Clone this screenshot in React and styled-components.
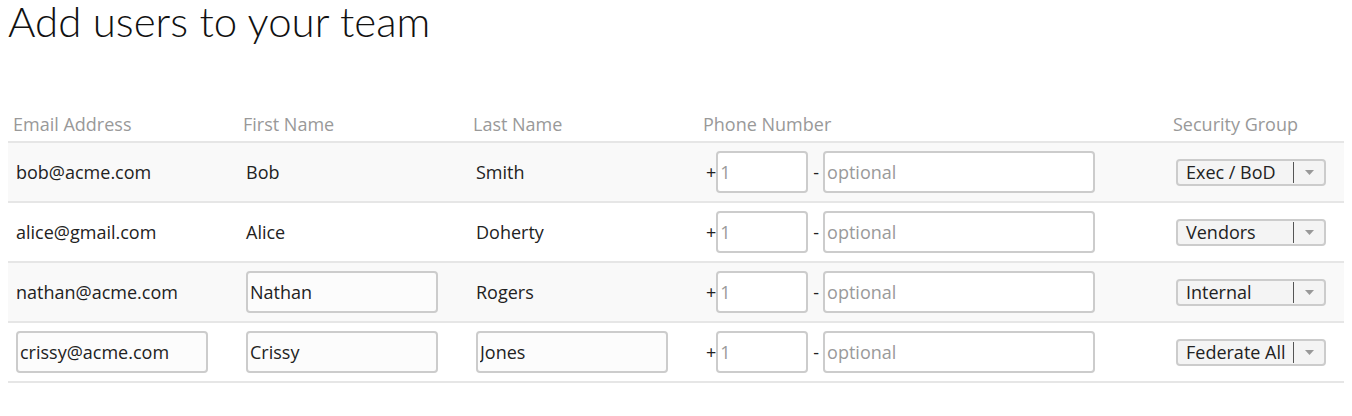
import React from "react";
import styled, { createGlobalStyle } from "styled-components";

const GlobalStyle = createGlobalStyle`
  body {
    margin: 0 8px 8px;
    background: #ffffff;
    font-family: "Open Sans", "Liberation Sans", sans-serif;
    color: #222222;
  }
`;

const users = [
  { email: "bob@acme.com", first: "Bob", last: "Smith", group: "Exec / BoD" },
  { email: "alice@gmail.com", first: "Alice", last: "Doherty", group: "Vendors" },
  { email: "nathan@acme.com", first: "Nathan", last: "Rogers", group: "Internal", editFirst: true },
  {
    email: "crissy@acme.com",
    first: "Crissy",
    last: "Jones",
    group: "Federate All",
    editEmail: true,
    editFirst: true,
    editLast: true,
  },
];

const App = () => {
  return (
    <>
      <GlobalStyle />
      <Title>Add users to your team</Title>
      <Table>
        <colgroup>
          <col style={{ width: 230 }} />
          <col style={{ width: 230 }} />
          <col style={{ width: 230 }} />
          <col style={{ width: 470 }} />
          <col />
        </colgroup>
        <thead>
          <tr>
            <HeadCell>Email Address</HeadCell>
            <HeadCell>First Name</HeadCell>
            <HeadCell>Last Name</HeadCell>
            <HeadCell>Phone Number</HeadCell>
            <HeadCell>Security Group</HeadCell>
          </tr>
        </thead>
        <tbody>
          {users.map((u, i) => (
            <Row key={u.email} $striped={i % 2 === 0}>
              <Cell>{u.editEmail ? <TextInput defaultValue={u.email} /> : u.email}</Cell>
              <Cell>{u.editFirst ? <TextInput defaultValue={u.first} /> : u.first}</Cell>
              <Cell>{u.editLast ? <TextInput defaultValue={u.last} /> : u.last}</Cell>
              <Cell>
                <Phone>
                  <Sign>+</Sign>
                  <PhoneInput $w={92} placeholder="1" />
                  <Sign $gap>-</Sign>
                  <PhoneInput $w={272} placeholder="optional" />
                </Phone>
              </Cell>
              <Cell>
                <Select>
                  <SelectLabel>{u.group}</SelectLabel>
                  <SelectArrow>
                    <svg width="9" height="5" viewBox="0 0 9 5">
                      <path d="M0 0 H9 L4.5 5 Z" fill="#999" />
                    </svg>
                  </SelectArrow>
                </Select>
              </Cell>
            </Row>
          ))}
        </tbody>
      </Table>
    </>
  );
};

export default App;

const Title = styled.h1`
  margin: 0;
  font-family: Lato, "Open Sans", sans-serif;
  font-weight: 300;
  font-size: 42px;
  line-height: 42px;
  color: #111111;
`;

const Table = styled.table`
  margin-top: 65px;
  width: 1336px;
  border-collapse: collapse;
  table-layout: fixed;
  font-size: 18px;
`;

const HeadCell = styled.th`
  height: 34px;
  padding: 0 5px;
  text-align: left;
  font-weight: 400;
  color: #999999;
  vertical-align: middle;
  border-bottom: 2px solid #e6e6e6;
`;

const Row = styled.tr`
  background: ${(p) => (p.$striped ? "#f9f9f9" : "#ffffff")};
`;

const Cell = styled.td`
  height: 58px;
  padding: 0 8px;
  vertical-align: middle;
  border-bottom: 2px solid #e6e6e6;
  white-space: nowrap;
`;

const TextInput = styled.input`
  box-sizing: border-box;
  width: 192px;
  height: 42px;
  padding: 0 2px;
  border: 2px solid #cccccc;
  border-radius: 4px;
  background: #fcfcfc;
  font-family: "Open Sans", sans-serif;
  font-size: 18px;
  color: #222222;
  outline: none;
`;

const Phone = styled.div`
  display: flex;
  align-items: center;
`;

const Sign = styled.span`
  margin: ${(p) => (p.$gap ? "0 4px 0 5px" : "0")};
  color: #222222;
`;

const PhoneInput = styled.input`
  box-sizing: border-box;
  width: ${(p) => p.$w}px;
  height: 42px;
  padding: 0 2px;
  border: 2px solid #cccccc;
  border-radius: 4px;
  background: #ffffff;
  font-family: "Open Sans", sans-serif;
  font-size: 18px;
  outline: none;
  &::placeholder {
    color: #9a9a9a;
  }
`;

const Select = styled.div`
  box-sizing: border-box;
  display: flex;
  align-items: stretch;
  width: 150px;
  height: 27px;
  border: 2px solid #cccccc;
  border-radius: 4px;
  background: #f4f4f4;
`;

const SelectLabel = styled.span`
  flex: 1;
  padding-left: 8px;
  line-height: 23px;
  color: #222222;
`;

const SelectArrow = styled.span`
  width: 30px;
  display: flex;
  align-items: center;
  justify-content: center;
  border-left: 1px solid #555555;
  margin: 1px 0;
`;
